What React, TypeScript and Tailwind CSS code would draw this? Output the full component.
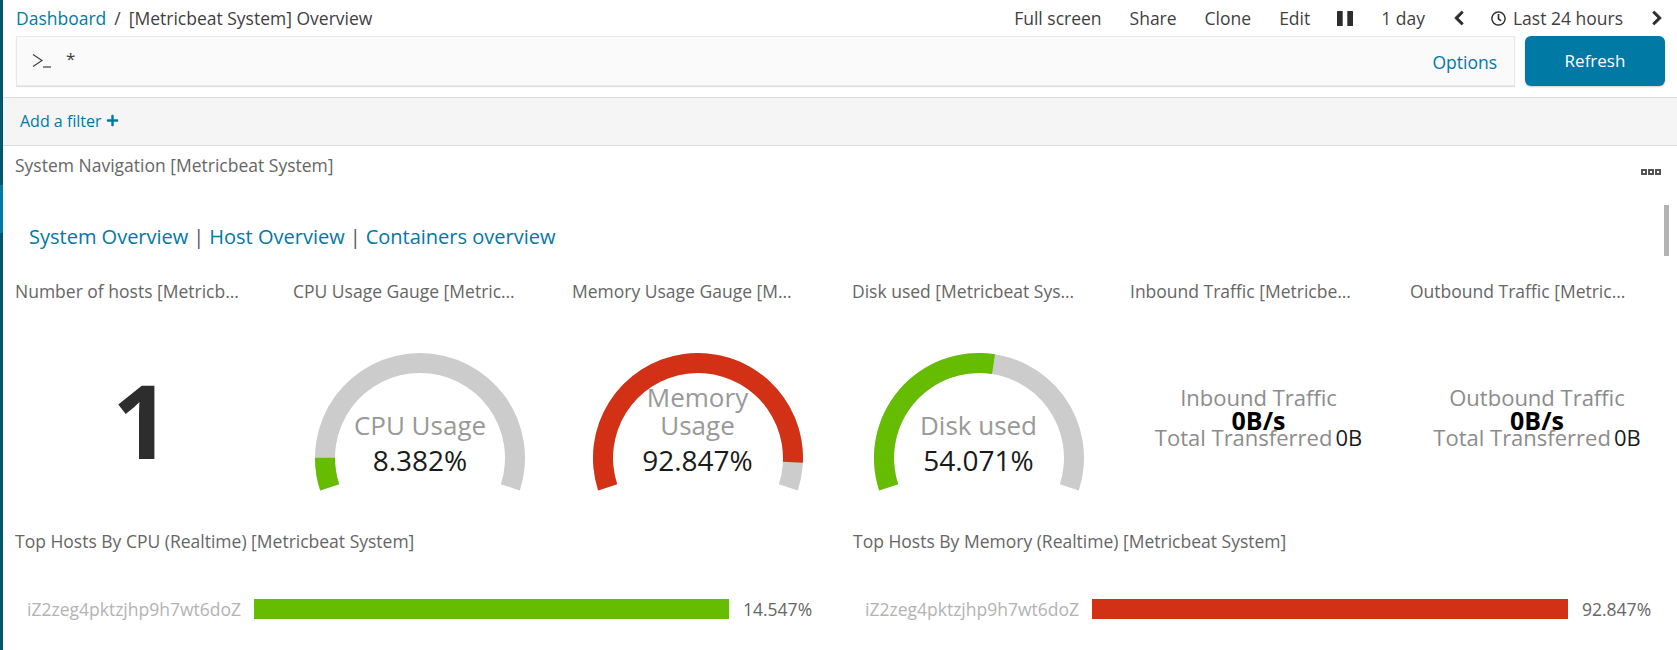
import React from "react";
import { FaChevronLeft, FaChevronRight, FaPlus, FaRegClock } from "react-icons/fa";

const GREEN = "#65bc00";
const RED = "#d33115";

function arcPath(fromDeg: number, toDeg: number) {
  const cx = 105;
  const cy = 105;
  const outer = 105;
  const inner = 85;
  const pt = (r: number, deg: number) => {
    const a = ((deg - 90) * Math.PI) / 180;
    return `${(cx + r * Math.cos(a)).toFixed(2)} ${(cy + r * Math.sin(a)).toFixed(2)}`;
  };
  const large = toDeg - fromDeg > 180 ? 1 : 0;
  return `M${pt(outer, fromDeg)} A${outer} ${outer} 0 ${large} 1 ${pt(outer, toDeg)} L${pt(inner, toDeg)} A${inner} ${inner} 0 ${large} 0 ${pt(inner, fromDeg)} Z`;
}

function Gauge({ label, value, percent, color }: { label: string[]; value: string; percent: number; color: string }) {
  const end = -108 + (216 * percent) / 100;
  return (
    <div className="relative w-[210px] h-[140px] mx-auto">
      <svg width="210" height="140" viewBox="0 0 210 140">
        <path d={arcPath(-108, 108)} fill="#cccccc" />
        <path d={arcPath(-108, end)} fill={color} />
      </svg>
      <div className="absolute left-0 right-0 bottom-[12px] flex flex-col items-center">
        {label.map((line) => (
          <div key={line} className="text-[26px] leading-[28px] text-[#999999]">
            {line}
          </div>
        ))}
        <div className="text-[28px] leading-[42px] text-[#1a1a1a]">{value}</div>
      </div>
    </div>
  );
}

function Traffic({ label }: { label: string }) {
  return (
    <div className="flex flex-col items-center pt-[11px]">
      <div className="text-[22px] leading-[26px] text-[#8c8c8c] whitespace-nowrap">{label}</div>
      <div className="text-[25px] leading-[21px] font-bold text-black">0B/s</div>
      <div className="flex items-center gap-[3px] text-[22px] leading-[24px] -mt-[6px] whitespace-nowrap">
        <span className="text-[#8c8c8c]">Total Transferred</span>
        <span className="text-[#1a1a1a]">0B</span>
      </div>
    </div>
  );
}

function HostBar({ title, value, color, className }: { title: string; value: string; color: string; className: string }) {
  return (
    <div className={className}>
      <div className="pl-[7px] h-[24px] leading-[24px] text-[17.5px] text-[#666666]">{title}</div>
      <div className="flex items-center mt-[46px] h-[20px]">
        <div className="w-[233px] shrink-0 text-right text-[17.5px] text-[#b3b3b3]">iZ2zeg4pktzjhp9h7wt6doZ</div>
        <div className="flex-1 h-[20px] ml-[13px]" style={{ backgroundColor: color }} />
        <div className="w-[83px] shrink-0 pl-[14px] text-[17.5px] text-[#666666]">{value}</div>
      </div>
    </div>
  );
}

const panelTitle = "pl-[7px] w-[232px] h-[24px] leading-[24px] text-[17.5px] text-[#666666] truncate";

export default function App() {
  return (
    <div className="flex h-[650px] overflow-hidden bg-white font-['Open_Sans',sans-serif]">
      {/* global nav edge */}
      <div className="w-[3px] shrink-0 flex flex-col bg-[#005571]">
        <div className="h-[185px]" />
        <div className="h-[48px] bg-[#0079a5]" />
      </div>

      <div className="relative flex-1 min-w-0">
        {/* top bar */}
        <div className="flex items-center justify-between h-[36px] pl-[13px] pr-[12px] text-[17.5px] text-[#3f3f3f]">
          <div className="flex items-center">
            <span className="text-[#0079a5]">Dashboard</span>
            <span className="ml-[8px]">/</span>
            <span className="ml-[8px]">[Metricbeat System] Overview</span>
          </div>
          <div className="flex items-center">
            <span>Full screen</span>
            <span className="ml-[28px]">Share</span>
            <span className="ml-[28px]">Clone</span>
            <span className="ml-[28px]">Edit</span>
            <svg className="ml-[27px]" width="16" height="15" viewBox="0 0 16 15" fill="#2d2d2d">
              <rect x="0" y="0" width="5.7" height="15" rx="0.5" />
              <rect x="10.3" y="0" width="5.7" height="15" rx="0.5" />
            </svg>
            <span className="ml-[28px]">1 day</span>
            <FaChevronLeft className="ml-[26px] text-[#2d2d2d]" size={16} stroke="currentColor" strokeWidth={24} />
            <FaRegClock className="ml-[24px] text-[#2d2d2d]" size={15} />
            <span className="ml-[7px]">Last 24 hours</span>
            <FaChevronRight className="ml-[26px] text-[#2d2d2d]" size={16} stroke="currentColor" strokeWidth={24} />
          </div>
        </div>

        {/* query row */}
        <div className="flex h-[50px] pl-[13px] pr-[12px] gap-[10px]">
          <div className="flex-1 flex items-center bg-[#fafafa] border border-[#e8e8e8] shadow-[0_1px_1px_rgba(0,0,0,0.12)] pl-[15px] pr-[17px]">
            <svg width="20" height="16" viewBox="0 0 20 16" fill="none" stroke="#3f3f3f" strokeWidth="1.2">
              <path d="M1 1.5 L10 7.5 L1 13.5" />
              <path d="M11 14 H19" />
            </svg>
            <span className="ml-[14px] text-[17px] text-[#3f3f3f] -mt-[4px]">*</span>
            <span className="ml-auto text-[17.5px] text-[#0079a5] mt-[2px]">Options</span>
          </div>
          <div className="w-[140px] flex items-center justify-center rounded-[6px] bg-[#0079a5] text-white text-[17px] font-medium shadow-[0_1px_2px_rgba(0,0,0,0.2)]">
            Refresh
          </div>
        </div>

        {/* filter bar */}
        <div className="flex items-center mt-[11px] h-[49px] pl-[17px] pb-[2px] bg-[#f5f5f5] border-y border-[#dbdbdb] text-[16px] text-[#0079a5]">
          <span>Add a filter</span>
          <FaPlus className="ml-[4px]" size={13} />
        </div>

        {/* navigation panel */}
        <div className="pl-[5px]">
          <div className="flex justify-between h-[36px] text-[17.5px] text-[#666666] pl-[7px] pr-[16px]">
            <span className="mt-[7px] leading-[24px]">System Navigation [Metricbeat System]</span>
            <div className="flex gap-[1px] mt-[23px]">
              <span className="w-[6px] h-[6px] border-2 border-[#555555]" />
              <span className="w-[6px] h-[6px] border-2 border-[#555555]" />
              <span className="w-[6px] h-[6px] border-2 border-[#555555]" />
            </div>
          </div>
          <div className="flex items-center h-[28px] mt-[41px] pl-[21px] text-[20px] text-[#555555]">
            <span className="text-[#0079a5]">System Overview</span>
            <span className="mx-[5px]">|</span>
            <span className="text-[#0079a5]">Host Overview</span>
            <span className="mx-[5px]">|</span>
            <span className="text-[#0079a5]">Containers overview</span>
          </div>

          {/* metric panels */}
          <div className="grid grid-cols-[267px_268px_269px_267px_269px_268px] gap-x-[11px] mt-[28px]">
            <div className={panelTitle}>Number of hosts [Metricbeat System]</div>
            <div className={panelTitle}>CPU Usage Gauge [Metricbeat System]</div>
            <div className={panelTitle}>Memory Usage Gauge [Metricbeat System]</div>
            <div className={panelTitle}>Disk used [Metricbeat System]</div>
            <div className={panelTitle}>Inbound Traffic [Metricbeat System]</div>
            <div className={panelTitle}>Outbound Traffic [Metricbeat System]</div>

            <div className="h-[226px] pt-[62px] flex flex-col items-center">
              <div className="text-[102px] leading-[110px] font-bold text-[#2d2d2d]">1</div>
            </div>
            <div className="pt-[50px]">
              <Gauge label={["CPU Usage"]} value="8.382%" percent={8.382} color={GREEN} />
            </div>
            <div className="pt-[50px] pr-[4px]">
              <Gauge label={["Memory", "Usage"]} value="92.847%" percent={92.847} color={RED} />
            </div>
            <div className="pt-[50px]">
              <Gauge label={["Disk used"]} value="54.071%" percent={54.071} color={GREEN} />
            </div>
            <div className="pt-[70px] pl-[2px]">
              <Traffic label="Inbound Traffic" />
            </div>
            <div className="pt-[70px]">
              <Traffic label="Outbound Traffic" />
            </div>
          </div>

          {/* top hosts */}
          <div className="grid grid-cols-[838px_1fr]">
            <HostBar title="Top Hosts By CPU (Realtime) [Metricbeat System]" value="14.547%" color={GREEN} className="pr-[34px]" />
            <HostBar title="Top Hosts By Memory (Realtime) [Metricbeat System]" value="92.847%" color={RED} className="pr-[26px]" />
          </div>
        </div>

        {/* panel scrollbar */}
        <div className="absolute top-[205px] right-[8px] w-[5px] h-[51px] bg-[#b3b3b3]" />
      </div>
    </div>
  );
}
